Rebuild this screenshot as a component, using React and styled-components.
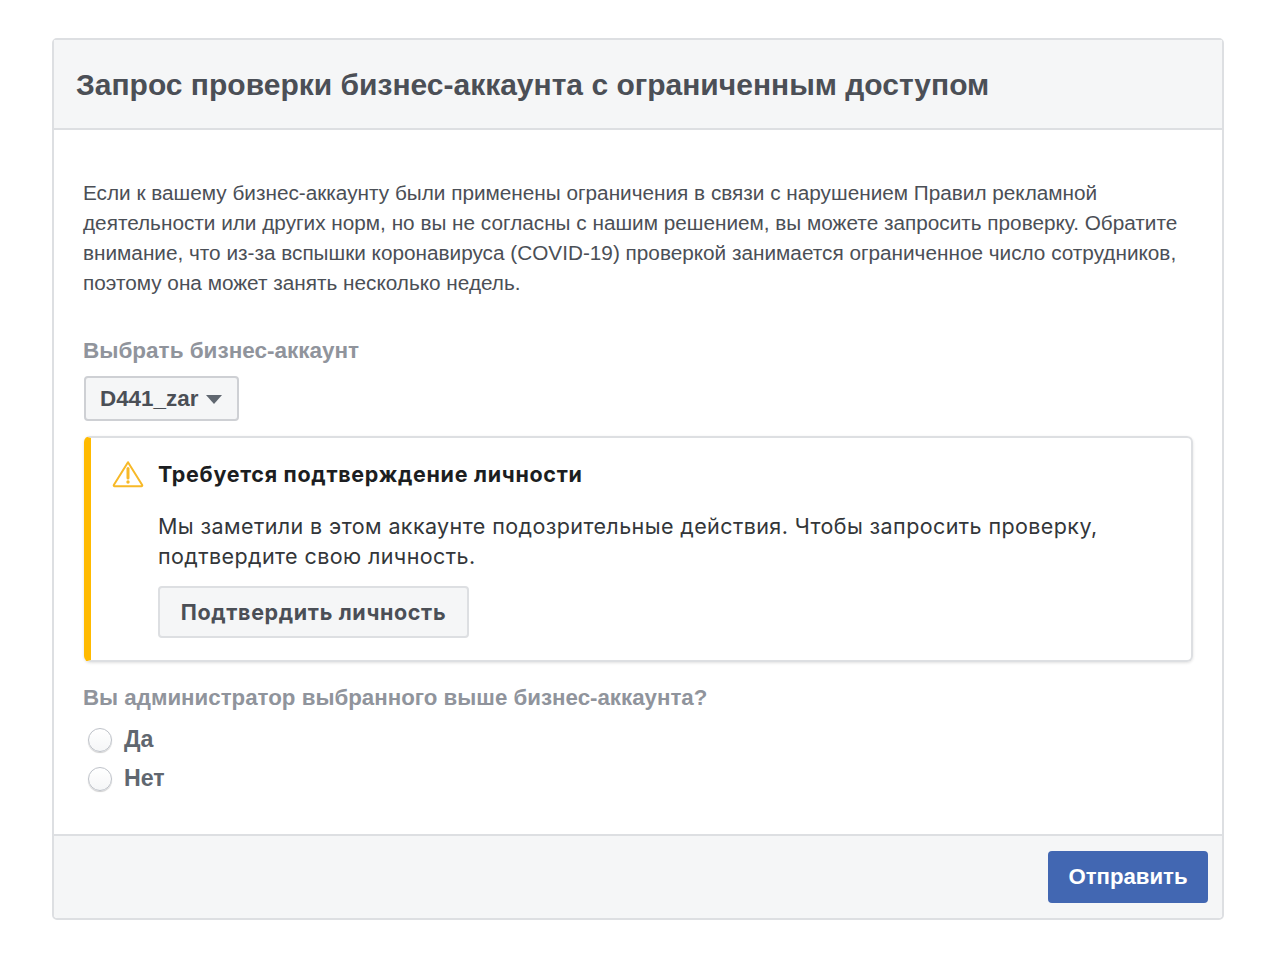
import React from "react";
import styled, { createGlobalStyle } from "styled-components";

const colors = {
  border: "#dddfe2",
  panel: "#f5f6f7",
  text: "#4b4f56",
  muted: "#90949c",
  dark: "#1c1e21",
  blue: "#4267b2",
  yellow: "#ffba00",
};

const GlobalStyle = createGlobalStyle`
  html, body {
    margin: 0;
    padding: 0;
    background: #fff;
    font-family: "Liberation Sans", Arial, sans-serif;
  }
`;

const App = () => {
  return (
    <Page>
      <GlobalStyle />
      <Card>
        <CardHeader>
          <MainTitle>Запрос проверки бизнес-аккаунта с ограниченным доступом</MainTitle>
        </CardHeader>
        <CardBody>
          <Intro>
            Если к вашему бизнес-аккаунту были применены ограничения в связи с нарушением Правил рекламной
            <br />
            деятельности или других норм, но вы не согласны с нашим решением, вы можете запросить проверку. Обратите
            <br />
            внимание, что из-за вспышки коронавируса (COVID-19) проверкой занимается ограниченное число сотрудников,
            <br />
            поэтому она может занять несколько недель.
          </Intro>
          <FieldLabel>Выбрать бизнес-аккаунт</FieldLabel>
          <SelectButton type="button">
            D441_zar
            <Caret />
          </SelectButton>
          <Alert>
            <AlertTitleRow>
              <WarningIcon width="32" height="28" viewBox="0 0 32 28" fill="none">
                <path
                  d="M16 2.2 L30.2 25 a0.8 0.8 0 0 1 -0.7 1.2 H2.5 a0.8 0.8 0 0 1 -0.7 -1.2 Z"
                  stroke="#f7b928"
                  strokeWidth="2"
                  strokeLinejoin="round"
                />
                <path d="M16 8.5 V18" stroke="#f7b928" strokeWidth="3" strokeLinecap="round" />
                <circle cx="16" cy="22" r="1.7" fill="#f7b928" />
              </WarningIcon>
              <AlertTitle>Требуется подтверждение личности</AlertTitle>
            </AlertTitleRow>
            <AlertContent>
              <AlertText>
                Мы заметили в этом аккаунте подозрительные действия. Чтобы запросить проверку,
                <br />
                подтвердите свою личность.
              </AlertText>
              <ConfirmButton type="button">Подтвердить личность</ConfirmButton>
            </AlertContent>
          </Alert>
          <QuestionLabel>Вы администратор выбранного выше бизнес-аккаунта?</QuestionLabel>
          <RadioGroup>
            <RadioRow>
              <Radio />
              <RadioLabel>Да</RadioLabel>
            </RadioRow>
            <RadioRow>
              <Radio />
              <RadioLabel>Нет</RadioLabel>
            </RadioRow>
          </RadioGroup>
        </CardBody>
        <CardFooter>
          <SubmitButton type="button">Отправить</SubmitButton>
        </CardFooter>
      </Card>
    </Page>
  );
};

const Page = styled.div`
  padding: 38px 56px 48px 52px;
  height: 968px;
  box-sizing: border-box;
`;

const Card = styled.div`
  border: 2px solid ${colors.border};
  border-radius: 5px;
  background: #fff;
  height: 882px;
  box-sizing: border-box;
  display: flex;
  flex-direction: column;
`;

const CardHeader = styled.div`
  height: 90px;
  box-sizing: border-box;
  background: ${colors.panel};
  border-bottom: 2px solid ${colors.border};
  padding: 1px 0 0 22px;
  display: flex;
  align-items: center;
`;

const MainTitle = styled.h2`
  margin: 0;
  font-size: 30px;
  font-weight: 700;
  color: ${colors.text};
  white-space: nowrap;
`;

const CardBody = styled.div`
  flex: 1;
  padding: 48px 30px 0 30px;
`;

const Intro = styled.p`
  margin: 0;
  margin-left: -1px;
  font-size: 20.75px;
  line-height: 30px;
  color: ${colors.text};
  white-space: nowrap;
`;

const FieldLabel = styled.div`
  margin-top: 38px;
  margin-left: -1px;
  font-size: 22.5px;
  line-height: 30px;
  font-weight: 700;
  color: ${colors.muted};
`;

const SelectButton = styled.button`
  margin-top: 10px;
  display: flex;
  align-items: center;
  gap: 8px;
  height: 45px;
  width: 155px;
  padding: 0 0 0 14px;
  box-sizing: border-box;
  border: 2px solid #ced0d4;
  border-radius: 4px;
  background: ${colors.panel};
  font-family: inherit;
  font-size: 22.4px;
  font-weight: 700;
  color: ${colors.text};
`;

const Caret = styled.span`
  width: 0;
  height: 0;
  margin-top: 2px;
  border-left: 8px solid transparent;
  border-right: 8px solid transparent;
  border-top: 9px solid #606770;
`;

const Alert = styled.div`
  margin-top: 15px;
  width: 1109px;
  height: 226px;
  box-sizing: border-box;
  border: 2px solid ${colors.border};
  border-left: 7px solid ${colors.yellow};
  border-radius: 6px;
  box-shadow: 0 1px 3px rgba(0, 0, 0, 0.12);
  padding: 21px 0 0 21px;
  font-family: Inter, "Liberation Sans", sans-serif;
`;

const AlertTitleRow = styled.div`
  display: flex;
  align-items: center;
  gap: 14px;
`;

const WarningIcon = styled.svg`
  flex: none;
`;

const AlertTitle = styled.div`
  font-size: 21.5px;
  line-height: 30px;
  font-weight: 700;
  letter-spacing: 0.7px;
  color: ${colors.dark};
`;

const AlertContent = styled.div`
  padding: 22px 0 0 46px;
`;

const AlertText = styled.p`
  margin: 0;
  font-size: 21.5px;
  line-height: 30px;
  letter-spacing: 0.4px;
  color: #333639;
  white-space: nowrap;
`;

const ConfirmButton = styled.button`
  display: block;
  margin-top: 15px;
  width: 311px;
  height: 52px;
  box-sizing: border-box;
  border: 2px solid ${colors.border};
  border-radius: 4px;
  background: ${colors.panel};
  font-family: inherit;
  font-size: 21.5px;
  font-weight: 700;
  letter-spacing: 0.65px;
  color: ${colors.text};
`;

const QuestionLabel = styled.div`
  margin-top: 21px;
  margin-left: -1px;
  font-size: 22.3px;
  line-height: 30px;
  font-weight: 700;
  color: ${colors.muted};
`;

const RadioGroup = styled.div`
  margin-top: 7px;
`;

const RadioRow = styled.div`
  display: flex;
  align-items: center;
  gap: 12px;
  height: 39px;
  padding-left: 4px;
`;

const Radio = styled.span`
  width: 24px;
  height: 24px;
  box-sizing: border-box;
  border: 1px solid #bec2c9;
  border-radius: 50%;
  background: linear-gradient(#fff, ${colors.panel});
  box-shadow: 0 1px 1px rgba(0, 0, 0, 0.2);
`;

const RadioLabel = styled.span`
  font-size: 23.2px;
  font-weight: 700;
  color: #606770;
`;

const CardFooter = styled.div`
  height: 84px;
  box-sizing: border-box;
  background: ${colors.panel};
  border-top: 2px solid ${colors.border};
  border-radius: 0 0 4px 4px;
  padding: 15px 14px 0 0;
  display: flex;
  justify-content: flex-end;
  align-items: flex-start;
`;

const SubmitButton = styled.button`
  width: 160px;
  height: 52px;
  border: none;
  border-radius: 4px;
  background: ${colors.blue};
  color: #fff;
  font-family: inherit;
  font-size: 22.2px;
  font-weight: 700;
`;

export default App;
